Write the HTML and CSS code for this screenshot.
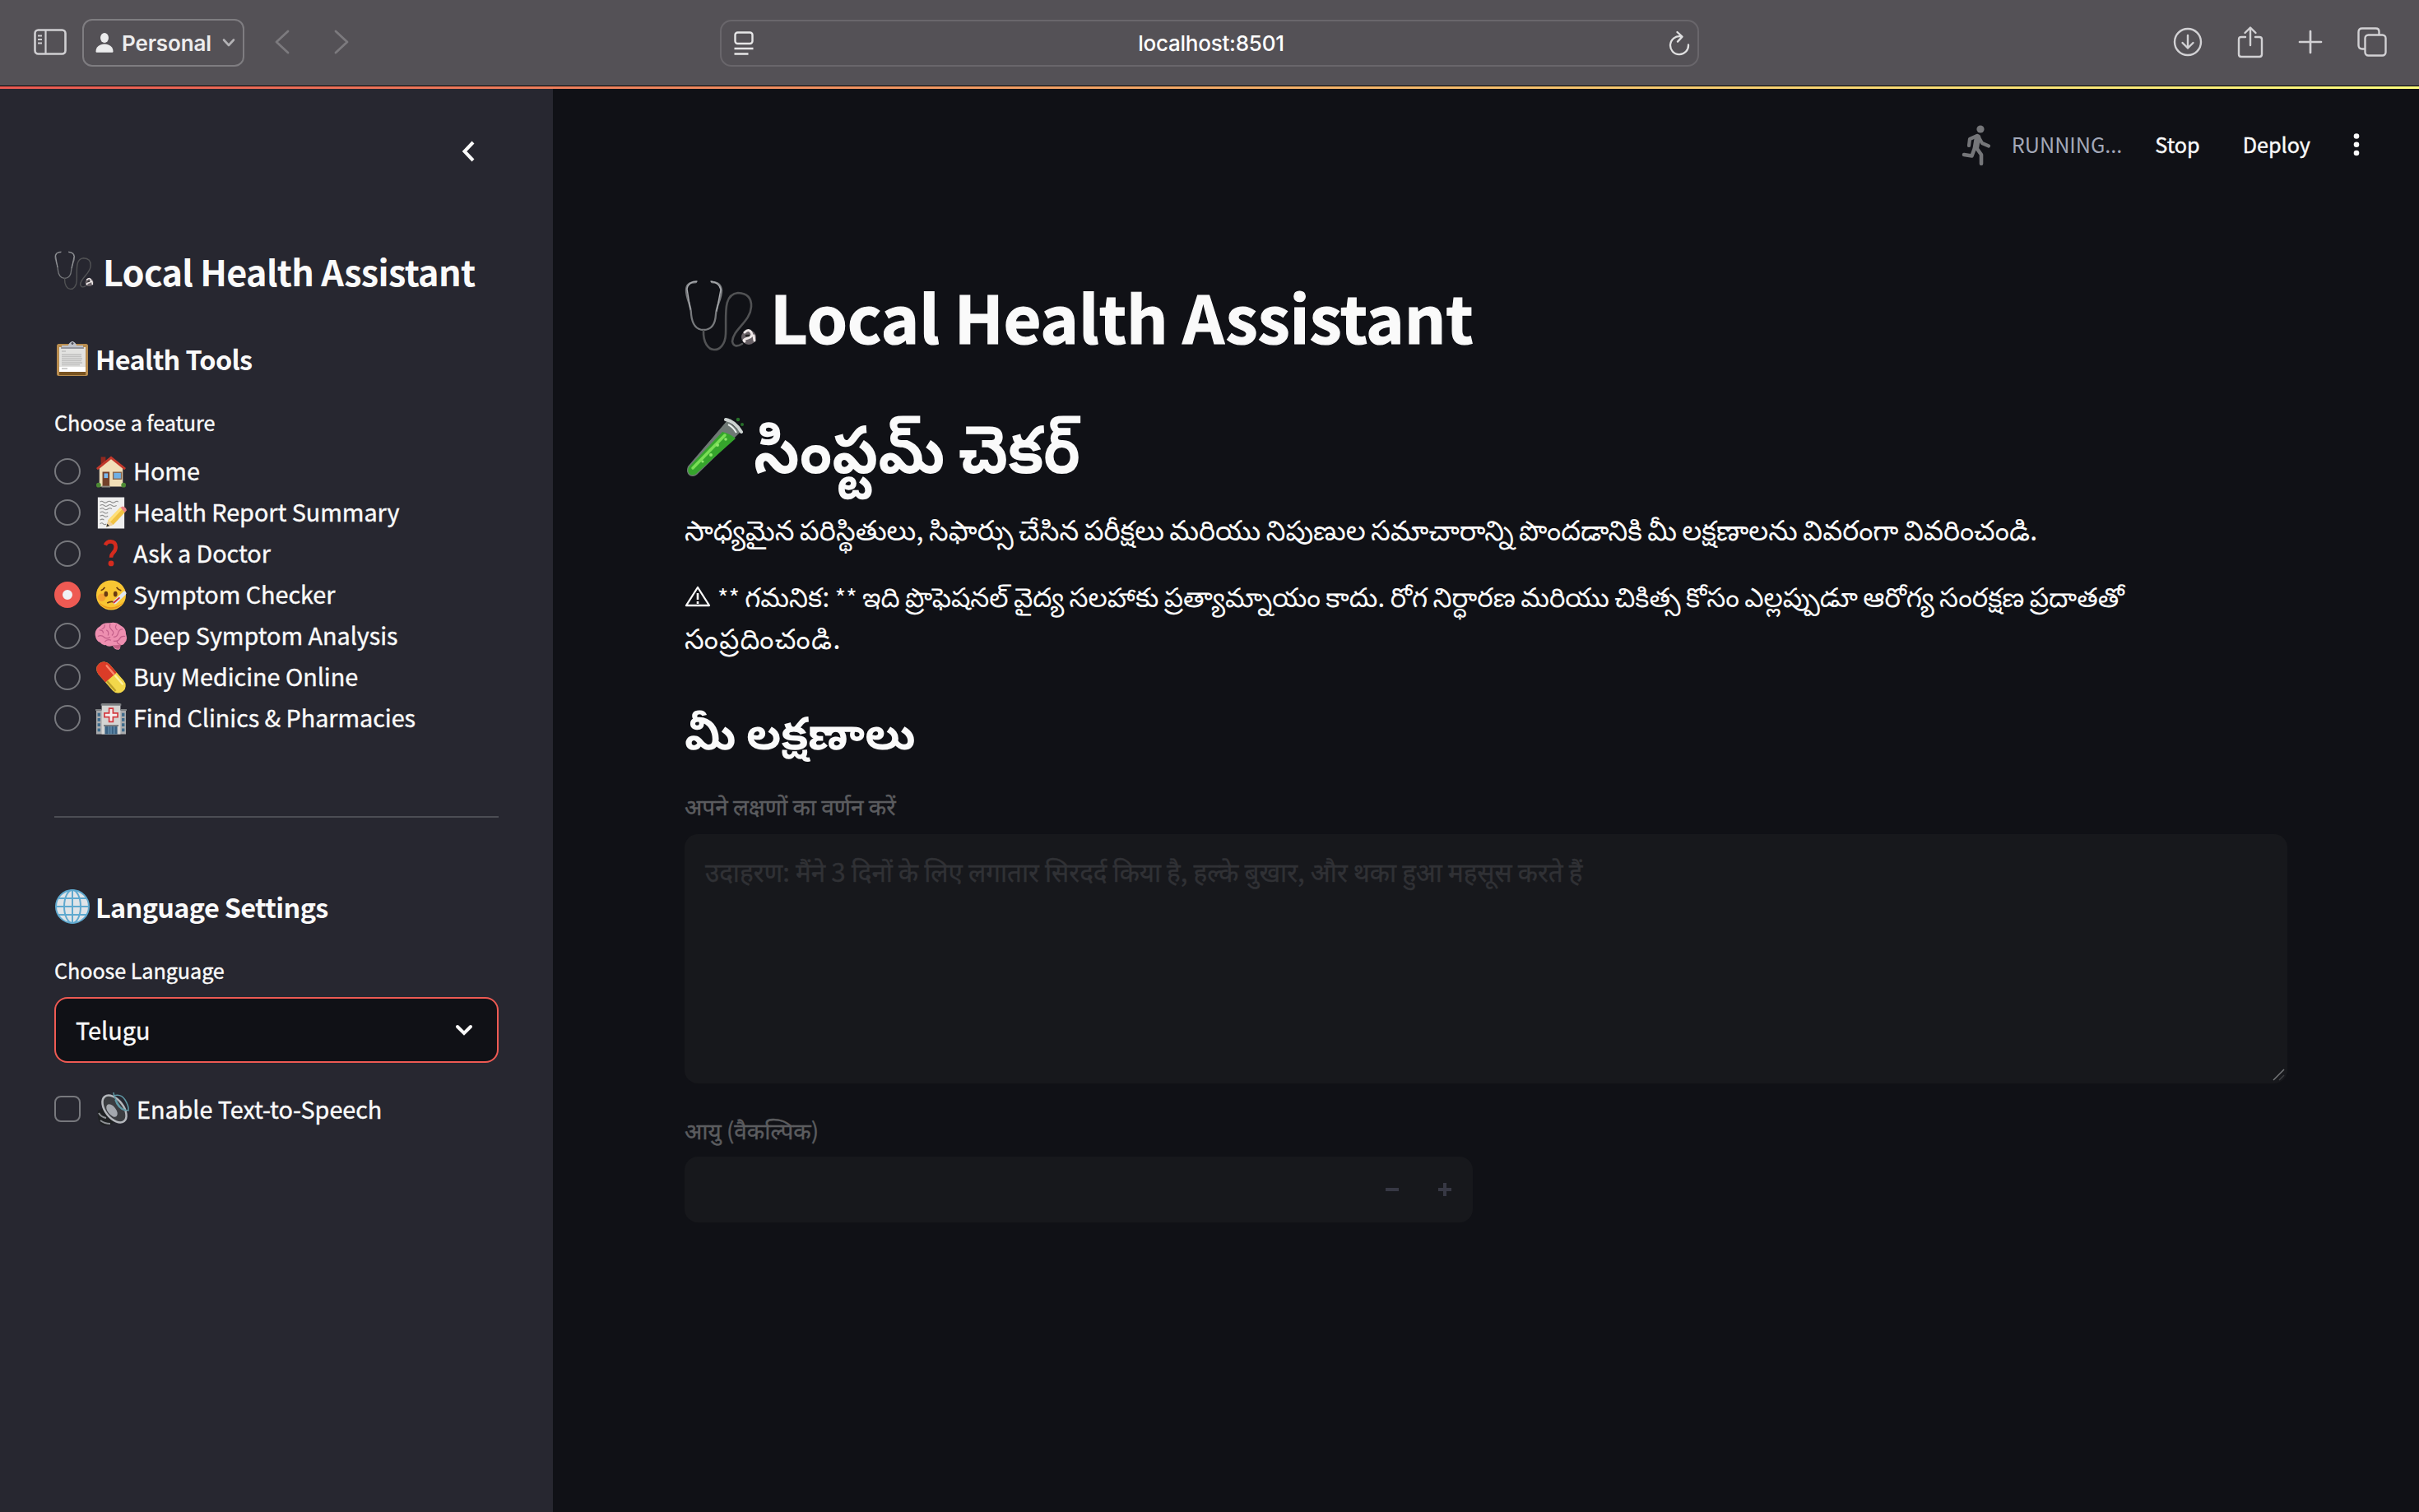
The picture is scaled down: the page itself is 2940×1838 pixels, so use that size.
FILE: index.html
```html
<!DOCTYPE html>
<html lang="te">
<head>
<meta charset="utf-8">
<title>Local Health Assistant</title>
<link rel="stylesheet" href="styles.css">
</head>
<body>
<header class="browser">
  <div class="browser-left">
    <svg class="i-sidebar" width="40" height="32" viewBox="0 0 40 32" fill="none" stroke="#d0cfd2" stroke-width="2.6"><rect x="1.5" y="1.5" width="37" height="29" rx="4"/><path d="M14.5 2v28M5 8.500h5M5 13h5M5 17.500h5" stroke-width="2.200"/></svg>
    <div class="profile">
      <svg width="22" height="24" viewBox="0 0 22 24" fill="#ececed"><ellipse cx="11" cy="6" rx="5" ry="6"/><path d="M0.500 22.500C0.500 17 5 13.500 11 13.500s10.500 3.500 10.500 9q0 1.300-1 1.300H1.500q-1 0-1-1.300z"/></svg>
      <span class="profile-name">Personal</span>
      <svg width="16" height="10" viewBox="0 0 16 10" fill="none" stroke="#b3b2b5" stroke-width="2.600" stroke-linecap="round" stroke-linejoin="round"><path d="M2 1.500l6 6.500 6-6.500"/></svg>
    </div>
    <svg class="i-back" width="18" height="30" viewBox="0 0 18 30" fill="none" stroke="#7c7a7e" stroke-width="2.800" stroke-linecap="round" stroke-linejoin="round"><path d="M16 2L2 15l14 13"/></svg>
    <svg class="i-fwd" width="18" height="30" viewBox="0 0 18 30" fill="none" stroke="#7c7a7e" stroke-width="2.800" stroke-linecap="round" stroke-linejoin="round"><path d="M2 2l14 13L2 28"/></svg>
  </div>
  <div class="address">
    <svg width="24" height="30" viewBox="0 0 24 30" fill="none" stroke="#e6e6e7" stroke-width="2.400"><rect x="1.500" y="1.500" width="21" height="13.500" rx="3"/><path d="M.500 21h23M.500 27.500h17"/></svg>
    <span class="url">localhost:8501</span>
    <svg width="26" height="30" viewBox="0 0 26 30" fill="none" stroke="#e0e0e1" stroke-width="2.300" stroke-linecap="round" stroke-linejoin="round"><path d="M24 16.500A11 11 0 1 1 15 6.300M10.500 1l6 5.600-5.500 6"/></svg>
  </div>
  <div class="browser-right">
    <svg width="36" height="36" viewBox="0 0 36 36" fill="none" stroke="#d2d1d4" stroke-width="2.400" stroke-linecap="round" stroke-linejoin="round"><circle cx="18" cy="18" r="16"/><path d="M18 10v15.500M11.500 19l6.500 6.500 6.500-6.500"/></svg>
    <svg width="32" height="40" viewBox="0 0 32 40" fill="none" stroke="#d2d1d4" stroke-width="2.400" stroke-linecap="round" stroke-linejoin="round"><path d="M10 14H5q-3 0-3 3v18q0 3 3 3h22q3 0 3-3V17q0-3-3-3h-5M16 24V3M9.500 9L16 2.500 22.500 9"/></svg>
    <svg width="30" height="30" viewBox="0 0 30 30" fill="none" stroke="#d2d1d4" stroke-width="2.700" stroke-linecap="round"><path d="M15 2v26M2 15h26"/></svg>
    <svg width="36" height="36" viewBox="0 0 36 36" fill="none" stroke="#d2d1d4" stroke-width="2.400"><rect x="9.500" y="9.500" width="25" height="25" rx="4"/><path d="M9.500 26.500H6q-4.500 0-4.500-4.500V6q0-4.500 4.500-4.500h16.500q4 0 4 4v4"/></svg>
  </div>
</header>
<div class="decoration"></div>
<div class="app">
  <aside class="sidebar">
    <div class="collapse">
      <svg width="16" height="26" viewBox="0 0 16 26" fill="none" stroke="#fafafa" stroke-width="4"><path d="M14 2L3.500 13 14 24"/></svg>
    </div>
    <h2 class="side-title">
      <svg class="e-steth" viewBox="0 0 88 88"><use href="#steth"/></svg>
      <span>Local Health Assistant</span>
    </h2>
    <h3 class="side-heading tools">
      <svg viewBox="0 0 40 44" width="44" height="44"><rect x="1" y="4" width="38" height="39" rx="2.500" fill="#b98d4f"/><path d="M4 37h32v5H4z" fill="#795421"/><path d="M4 8h32v30H4z" fill="#e2e2e0"/><path d="M4 32h32v6H4z" fill="#fff"/><path d="M7 13h5M7 17h24M7 19.500h24M7 22h25M7 24.500h24M7 27h25M7 29.500h22M7 34h7" stroke="#c0c0bf" stroke-width="1.300"/><path d="M7 6h8q1-4.500 5-4.500T25 6h8v4H7z" fill="#bfc2ca"/><path d="M6 9h28" stroke="#85868c" stroke-width="1.500"/><circle cx="20" cy="3.500" r="2" fill="#53545d" stroke="#c7cbd5"/></svg>
      <span>Health Tools</span>
    </h3>
    <p class="label">Choose a feature</p>
    <div class="options">
      <label class="option"><i class="radio"></i>
        <svg viewBox="0 0 40 40"><path d="M7 1h6v12H7z" fill="#91281f"/><path d="M5 15L20 2l15 13v24H5z" fill="#f2dfb8"/><path d="M2 16.500L20 2l18 14.500" fill="none" stroke="#c3392c" stroke-width="3"/><path d="M9 20h9v19H9z" fill="#74412a"/><path d="M11 22h5v6h-5z" fill="#79baf0"/><path d="M22 20h12v10H22z" fill="#8a674d"/><path d="M23.500 21.500h9v7h-9z" fill="#6fb0e6"/><path d="M8 38h11v2H8z" fill="#8e8a83"/><circle cx="4" cy="37" r="3" fill="#4d8a34"/><circle cx="36" cy="37" r="3" fill="#4d8a34"/></svg>
        <span>Home</span></label>
      <label class="option"><i class="radio"></i>
        <svg viewBox="0 0 40 40"><path d="M3 0h34v40H3z" fill="#eeeeee"/><path d="M6 6q2-2 4 0t5 0 5 0 5 0 4 0M6 10.500q3-2 5 0t5 0 5 0 6 0M6 15q3-2 5 0t5 0 5 0M6 19.500q3-2 5 0t5 0M6 24q3-2 5 0t5 0M6 29q3-2 5 0M6 34q2-2 4 0t4 0" fill="none" stroke="#8b8b8b" stroke-width="1.100"/><path d="M14 38l2.500-9L32 13l6.500 5.500L23 35z" fill="#f0c243"/><path d="M16.500 29L32 13l2.500 2L19 31.500z" fill="#ffe07a"/><path d="M32 13l3-1.500q4 1 5 5l-2.500 3z" fill="#e98386"/><path d="M14 38l2.500-9 6.500 6z" fill="#efcf9a"/><path d="M14 38l1-4 3 2.500z" fill="#333"/></svg>
        <span>Health Report Summary</span></label>
      <label class="option"><i class="radio"></i>
        <svg viewBox="0 0 40 40"><path d="M12.500 8.500q2-4.500 7-4.500 6.500.500 6.500 7 0 4-3.500 7.500-2.500 2.500-2.500 6" fill="none" stroke="#d52b1e" stroke-width="4.800"/><circle cx="20" cy="32" r="3.600" fill="#d52b1e"/></svg>
        <span>Ask a Doctor</span></label>
      <label class="option"><i class="radio on"></i>
        <svg viewBox="0 0 40 40"><circle cx="20" cy="20" r="19" fill="#f9c633"/><path d="M3.500 28a19 19 0 0 0 33 0q-7 7.500-16.500 7.500T3.500 28z" fill="#eb9a1e"/><circle cx="8" cy="23" r="5" fill="#f39435" opacity=".7"/><ellipse cx="13.500" cy="18.500" rx="2.500" ry="3.600" fill="#6a3a12"/><ellipse cx="25.500" cy="18.500" rx="2.500" ry="3.600" fill="#6a3a12"/><path d="M7 14q3-1 5-4M27 10q2 3 6 4M15 30q5-3 9-1" fill="none" stroke="#6a3a12" stroke-width="1.800"/><path d="M25 29L37 17.500" stroke="#dfe6ef" stroke-width="5" stroke-linecap="round"/><path d="M23 30l8-7" stroke="#d32f3a" stroke-width="2"/></svg>
        <span>Symptom Checker</span></label>
      <label class="option"><i class="radio"></i>
        <svg viewBox="0 0 40 40"><path d="M0 20Q-2 12 6 7 10 2 18 3q8-2 14 3 7 3 7 11 3 8-2 12-1 3-6 2 2 4-1 6-5 1-8-5-6 2-9-1-4 1-7-3-5-2-6-8z" fill="#ee8fb0"/><path d="M22 31q5 1 10-1 1 4-2 6-5 1-8-5z" fill="#c26185"/><path d="M5 12q5 0 5 4M12 5q0 5-4 6M19 4q-2 5 2 8t0 7M27 5q-3 4 1 7M35 11q-5 0-6 5t-6 5M3 20q5-2 8 1t8 0M38 20q-5-1-7 3t-8 3M12 27q3-4 8-2M31 30q-4-1-3-4M14 12q4 2 2 7" fill="none" stroke="#c4608a" stroke-width="1.300"/></svg>
        <span>Deep Symptom Analysis</span></label>
      <label class="option"><i class="radio"></i>
        <svg viewBox="0 0 40 40"><g transform="rotate(49 20 20)"><rect x="-3.500" y="10.500" width="47" height="19" rx="9.500" fill="#f2d74a"/><path d="M20 10.500H6a9.500 9.500 0 0 0 0 19h14z" fill="#db3c28"/><path d="M5 14.500h14" stroke="#fa8a6d" stroke-width="2.500" stroke-linecap="round"/><path d="M22 14.500h14" stroke="#fff2a0" stroke-width="2.500" stroke-linecap="round"/><path d="M20 27h17" stroke="#bda02a" stroke-width="2.500"/></g></svg>
        <span>Buy Medicine Online</span></label>
      <label class="option"><i class="radio"></i>
        <svg viewBox="0 0 40 40"><path d="M1 9h38v31H1z" fill="#a9abad"/><path d="M8 1h24v39H8z" fill="#d5d5d3"/><path d="M7 1h26v2.500H7zM0 8h8v2H0zM32 8h8v2h-8z" fill="#7c7f82"/><path d="M17.500 7h5v6h6v5h-6v6h-5v-6h-6v-5h6z" fill="#f5eeee" stroke="#d33b40" stroke-width="1.800"/><path d="M12 29h16v11H12z" fill="#3b6283"/><path d="M10.500 28h19v2h-19z" fill="#77797c"/><path d="M17 30v10M20 30v10M24 30v10" stroke="#7ba5c3"/><path d="M4.500 13v26M35.500 13v26" stroke="#3d6b8c" stroke-width="3.500" stroke-dasharray="4 2.500"/></svg>
        <span>Find Clinics &amp; Pharmacies</span></label>
    </div>
    <hr class="divider">
    <h3 class="side-heading lang">
      <svg viewBox="0 0 44 44" width="44" height="44"><circle cx="22" cy="22" r="20" fill="#dfe4e8"/><g fill="none" stroke="#5fa9cf" stroke-width="2"><circle cx="22" cy="22" r="20"/><ellipse cx="22" cy="22" rx="10" ry="20"/><path d="M22 2v40M2 22h40M5 12h34M5 32h34"/></g></svg>
      <span>Language Settings</span>
    </h3>
    <p class="label">Choose Language</p>
    <div class="select">
      <span>Telugu</span>
      <svg width="22" height="16" viewBox="0 0 22 16" fill="none" stroke="#fafafa" stroke-width="4" stroke-linecap="round"><path d="M3 4l8 8 8-8"/></svg>
    </div>
    <label class="option tts"><i class="check"></i>
      <svg viewBox="0 0 44 42"><path d="M3 23l9-4 14 14-5 6q-7 4-14 1Q2 35 3 23z" fill="#1f2123"/><path d="M4 26q3 5 9 6M6 35q5 4 12 4" stroke="#8d9094" stroke-width="2" fill="none"/><ellipse cx="23" cy="21" rx="11" ry="19" transform="rotate(-38 23 21)" fill="#3b3d41" stroke="#b5b8bd" stroke-width="2.500"/><ellipse cx="20" cy="23" rx="5" ry="9" transform="rotate(-38 20 23)" fill="#a4a8ae"/><path d="M24 10q3 10 12 13M22 5q9-3 14 5t4 13q-8 0-13-9T22 1" fill="none" stroke="#5f98a5" stroke-width="1.500"/></svg>
      <span>Enable Text-to-Speech</span></label>
  </aside>
  <main class="main">
    <div class="status">
      <svg class="runner" width="36" height="50" viewBox="0 0 36 50" fill="none" stroke="#757679" stroke-linecap="round" stroke-linejoin="round"><circle cx="23" cy="6" r="4.600" fill="#757679" stroke="none"/><path d="M19.500 16l-2 12" stroke-width="7.500"/><path d="M19 14l-9 4-1 8M21 16l4 7 8 3.500" stroke-width="4.200"/><path d="M16 29l-3.500 9.500L3 37M19 30l5 7v11" stroke-width="4.600"/></svg>
      <span class="running">RUNNING...</span>
      <span class="stop">Stop</span>
      <span class="deploy">Deploy</span>
      <svg class="dots" width="8" height="30" viewBox="0 0 8 30" fill="#fafafa"><circle cx="4" cy="4.500" r="3.300"/><circle cx="4" cy="14.800" r="3.300"/><circle cx="4" cy="25" r="3.300"/></svg>
    </div>
    <div class="content">
      <h1 class="title">
        <svg class="e-steth-lg" viewBox="0 0 88 88">
          <g id="steth" fill="none" stroke-linecap="round"><path d="M14 3Q2 3 2 13C2 24 8 30 8 42Q10 61 23 61Q37 61 38 42C39 30 45 24 45 13Q44 3 33 3" stroke="#77797c" stroke-width="2.300"/><path d="M15 2Q5 2 3 11L7 36M32 2Q42 3 44 12L39 38" stroke="#a9abaf" stroke-width="1.400"/><path d="M23 62C22 92 49 92 50 66C51 43 46 18 65 16Q82 17 81 33C80 51 59 60 58 75Q60 84 70 78" stroke="#515254" stroke-width="2.600"/><circle cx="78" cy="70" r="9" fill="#696267"/><path d="M73 64q5-5 8 0t-4 7-4 4M84 68l1 6" stroke="#eee8e8" stroke-width="3"/><path d="M75 68h3" stroke="#222" stroke-width="2.500"/></g>
        </svg>
        <span>Local Health Assistant</span>
      </h1>
      <h1 class="subtitle">
        <svg width="74" height="74" viewBox="0 0 74 74"><path d="M52 4L4 60q-3 7 2 11 6 3 11-3L68 18z" fill="#6e7874"/><path d="M46 18L5 61q-2 6 2 9 5 2 9-3L62 26q-7-6-16-8z" fill="#35a52c"/><path d="M49 22L10 62" stroke="#79df55" stroke-width="3.500" stroke-linecap="round"/><path d="M50 3q11 2 19 15" stroke="#cdd3d1" stroke-width="4" fill="none" stroke-linecap="round"/><path d="M53 9q6 3 10 10" stroke="#e9eeec" stroke-width="2" fill="none"/><g fill="#8fe66c"><circle cx="40" cy="34" r="2"/><circle cx="32" cy="46" r="2"/><circle cx="50" cy="27" r="1.800"/><circle cx="22" cy="54" r="1.600"/></g><g fill="#276f2a"><circle cx="65" cy="3" r="2.200"/><circle cx="70" cy="9" r="2"/></g></svg>
        <span>సింప్టమ్ చెకర్</span>
      </h1>
      <p class="text intro"><span>సాధ్యమైన పరిస్థితులు, సిఫార్సు చేసిన పరీక్షలు మరియు నిపుణుల సమాచారాన్ని పొందడానికి మీ లక్షణాలను వివరంగా వివరించండి.</span></p>
      <p class="text note">
        <svg width="32" height="26" viewBox="0 0 32 26" fill="none" stroke="#fafafa" stroke-width="2.300" stroke-linejoin="round"><path d="M16 2L2 24h28z"/><path d="M16 9v8M16 19v3" stroke-width="2.600"/></svg>
        <span><span class="stars">**</span> గమనిక: <span class="stars">**</span> ఇది ప్రొఫెషనల్ వైద్య సలహాకు ప్రత్యామ్నాయం కాదు. రోగ నిర్ధారణ మరియు చికిత్స కోసం ఎల్లప్పుడూ ఆరోగ్య సంరక్షణ ప్రదాతతో</span>
      </p>
      <p class="text note-rest"><span>సంప్రదించండి.</span></p>
      <h2 class="symptoms"><span>మీ లక్షణాలు</span></h2>
      <p class="hlabel" lang="hi"><span>अपने लक्षणों का वर्णन करें</span></p>
      <div class="textarea" lang="hi"><span>उदाहरण: मैंने 3 दिनों के लिए लगातार सिरदर्द किया है, हल्के बुखार, और थका हुआ महसूस करते हैं</span>
        <svg class="grip" width="14" height="14" viewBox="0 0 14 14" stroke="#77787b" stroke-width="1.500"><path d="M0 13L13 0"/><path d="M7 13l6-6" stroke="#3c3d41"/></svg>
      </div>
      <p class="hlabel age" lang="hi"><span>आयु (वैकल्पिक)</span></p>
      <div class="number">
        <svg width="16" height="16" viewBox="0 0 16 16" stroke="#373844" stroke-width="4"><path d="M0 8h16"/></svg>
        <svg width="16" height="16" viewBox="0 0 16 16" stroke="#373844" stroke-width="4"><path d="M0 8h16M8 0v16"/></svg>
      </div>
    </div>
  </main>
</div>
</body>
</html>
```
FILE: styles.css
```css
* { box-sizing: border-box; }
body { margin: 0; width: 2940px; height: 1838px; overflow: hidden; background: #101116; color: #fafafa; font-family: "Noto Sans CJK SC", "Noto Sans", "Noto Sans Telugu", "Noto Sans Devanagari", sans-serif; }
h1, h2, h3, p { margin: 0; }
svg { display: block; flex: none; overflow: visible; }
span { white-space: nowrap; }

.browser { display: grid; grid-template-columns: 875px 1190px 875px; height: 105px; border-bottom: 1px solid #000; background: #545156; font-family: Inter, sans-serif; }
.browser-left { display: flex; align-items: flex-start; padding-left: 41px; }
.i-sidebar { margin-top: 35px; }
.profile { display: flex; align-items: center; width: 197px; height: 58px; margin: 23px 0 0 19px; padding-left: 14px; border: 2px solid #7f7d81; border-radius: 12px; }
.profile-name { width: 112px; margin-left: 10px; margin-right: 10px; font-size: 26px; font-weight: 600; letter-spacing: -0.15px; color: #ececed; }
.i-back { margin: 36px 0 0 37px; }
.i-fwd { margin: 36px 0 0 54px; }
.address { display: flex; align-items: center; justify-content: space-between; height: 57px; margin-top: 24px; padding: 0 9px 0 15px; border: 2px solid #69666b; border-radius: 14px; }
.url { font-size: 26px; font-weight: 500; letter-spacing: -0.25px; color: #fff; }
.browser-right { display: flex; align-items: center; justify-content: flex-end; gap: 42px; height: 102px; padding-right: 39px; }
.decoration { height: 3px; background: linear-gradient(90deg, #ea5a53, #ffff80); }

.app { display: grid; grid-template-columns: 672px 1fr; height: 1730px; }
.sidebar { padding: 0 66px; background: #272730; }
.collapse { height: 191px; padding: 63px 0 0 495px; }
.side-title { display: flex; align-items: center; height: 60px; font-size: 43.2px; line-height: 60px; font-weight: 700; letter-spacing: -0.7px; }
.e-steth { width: 48px; height: 48px; margin-right: 11px; }
.side-heading { display: flex; align-items: center; gap: 6px; height: 44px; font-size: 32.4px; line-height: 44px; font-weight: 700; letter-spacing: -0.65px; }
.tools { margin-top: 55px; }
.lang { margin-top: 86px; }
.label { height: 42px; margin-top: 34px; font-size: 25.2px; line-height: 42px; letter-spacing: -0.08px; -webkit-text-stroke: 0.4px; }
.options { margin-top: 14px; }
.option { display: flex; align-items: center; height: 50px; font-size: 28.8px; line-height: 48px; letter-spacing: -0.05px; -webkit-text-stroke: 0.4px; }
.option svg { width: 38px; height: 39px; margin: 0 8px 0 18px; -webkit-text-stroke: 0; }
.option span { padding-bottom: 3px; }
.radio { width: 32px; height: 32px; border: 2px solid #77787d; border-radius: 50%; }
.radio.on { border: 10px solid #ee5a53; background: #f0f2f6; }
.divider { height: 2px; margin: 94px 0 0; border: 0; background: #4c4d54; }
.select { display: flex; align-items: center; justify-content: space-between; height: 80px; margin-top: 12px; padding: 0 29px 0 24px; border: 2px solid #ee5a53; border-radius: 16px; background: #101116; font-size: 28.8px; line-height: 48px; -webkit-text-stroke: 0.4px; }
.tts { margin-top: 31px; }
.option.tts svg { width: 44px; height: 42px; margin-right: 6px; }
.option.tts span { padding-bottom: 1px; }
.check { width: 32px; height: 32px; border: 2px solid #77787d; border-radius: 8px; }

.status { display: flex; align-items: center; justify-content: flex-end; height: 136px; padding-right: 72px; font-size: 25.2px; line-height: 40px; -webkit-text-stroke: 0.4px; }
.status span { padding-bottom: 2px; }
.running { margin-left: 25px; color: #a3a8b8; -webkit-text-stroke: 0; }
.stop { margin-left: 40px; }
.deploy { margin-left: 52px; }
.dots { margin-left: 52px; }
.content { padding: 87px 160px 0 160px; }
.title { display: flex; align-items: center; height: 106px; font-size: 79.2px; line-height: 106px; letter-spacing: -0.15px; -webkit-text-stroke: 1.2px; }
.e-steth-lg { width: 88px; height: 88px; margin-right: 16px; }
.subtitle { display: flex; align-items: center; gap: 10px; height: 106px; margin-top: 54px; font-size: 80px; line-height: 106px; }
.subtitle span { margin-top: -8px; transform: scaleX(.902); transform-origin: left; }
.text { display: flex; align-items: center; height: 50px; font-size: 33.8px; line-height: 50px; word-spacing: -1.17px; }
.intro { margin-top: 21px; }
.note { margin-top: 32px; gap: 8px; font-size: 32.8px; word-spacing: -1px; }
.stars { font-size: 28.8px; }
.note-rest { letter-spacing: 1.3px; }
.symptoms { height: 70px; margin-top: 52px; font-size: 55px; line-height: 70px; }
.hlabel { height: 42px; margin-top: 36px; font-size: 27.9px; line-height: 42px; color: #5b5c5f; -webkit-text-stroke: 0.4px; }
.textarea { position: relative; height: 303px; margin-top: 14px; padding: 20px 25px; border-radius: 16px; background: #17181c; font-size: 31.4px; line-height: 50px; color: #303135; -webkit-text-stroke: 0.4px; }
.grip { position: absolute; right: 3px; bottom: 3px; }
.hlabel.age { height: 43px; margin-top: 35px; }
.number { display: flex; align-items: center; justify-content: flex-end; gap: 48px; width: 958px; height: 80px; margin-top: 11px; padding-right: 26px; border-radius: 16px; background: #17181c; }
```
